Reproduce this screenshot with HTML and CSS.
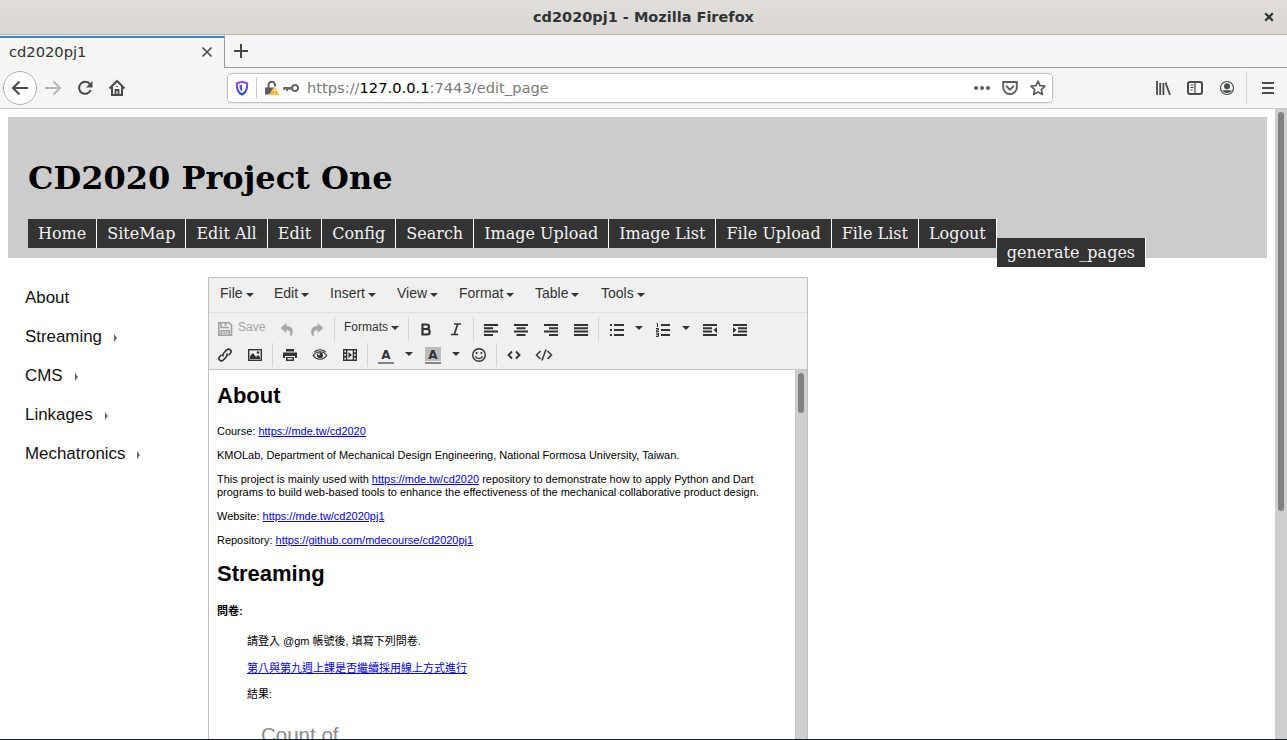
FILE: index.html
```html
<!DOCTYPE html>
<html lang="en">
<head>
<meta charset="utf-8">
<title>cd2020pj1</title>
<link rel="stylesheet" href="styles.css">
</head>
<body>
<div class="window">
  <div class="titlebar">
    <span class="window-title">cd2020pj1 - Mozilla Firefox</span>
    <svg class="window-close" width="10" height="10" viewBox="0 0 10 10"><path d="M1.200 1.200l7.600 7.600M8.800 1.200L1.200 8.800" stroke="#2e3436" stroke-width="2.300"/></svg>
  </div>
  <div class="tabs">
    <div class="tab"><span>cd2020pj1</span><svg width="12" height="12" viewBox="0 0 12 12"><path d="M1.500 1.500l9 9M10.500 1.500l-9 9" stroke="#4a5052" stroke-width="1.700"/></svg></div>
    <div class="tab-rest"><svg width="16" height="16" viewBox="0 0 16 16"><path d="M8 1v14M1 8h14" stroke="#42484a" stroke-width="2"/></svg></div>
  </div>
  <div class="toolbar">
    <div class="back"><svg width="18" height="18" viewBox="0 0 18 18" fill="none" stroke="#464c4e" stroke-width="2"><path d="M17 9H2M8.500 2.500L2 9l6.500 6.500"/></svg></div>
    <div class="tool"><svg width="18" height="18" viewBox="0 0 18 18" fill="none" stroke="#b3b5b5" stroke-width="2"><path d="M1 9h15M9.500 2.500L16 9l-6.500 6.500"/></svg></div>
    <div class="tool"><svg width="16" height="16" viewBox="0 0 16 16"><path d="M13 4.300A6 6 0 1 0 13.700 10" fill="none" stroke="#464c4e" stroke-width="2"/><path d="M15.500 1v6.500H9z" fill="#464c4e"/></svg></div>
    <div class="tool"><svg width="18" height="18" viewBox="0 0 18 18" fill="none" stroke="#464c4e" stroke-width="2"><path d="M1.500 9.500L9 2l7.500 7.500M4 8v8h10V8"/><path d="M7.500 16v-5h3v5M9 7v1" stroke-width="1.800"/></svg></div>
    <div class="urlbar">
      <svg class="shield" width="14" height="16" viewBox="0 0 14 16"><defs><linearGradient id="g" x1="0" y1="0" x2="0" y2="1"><stop offset="0" stop-color="#8a4dff"/><stop offset="1" stop-color="#1c4fc4"/></linearGradient></defs><path d="M7 1.700l5.200 1.500c.2 4.800-.3 9-5.200 11.300C2.100 12.200 1.600 8 1.800 3.200z" fill="none" stroke="url(#g)" stroke-width="2"/><path d="M7 4.500v7C4.700 9.700 4.500 7.500 4.500 5.200z" fill="url(#g)"/></svg>
      <i class="url-sep"></i>
      <svg class="lock" width="16" height="16" viewBox="0 0 16 16"><path d="M4.500 8V5a3 3 0 0 1 6.500 0v1.500" fill="none" stroke="#5f5f60" stroke-width="2"/><path d="M1 7.500h10v7H1z" fill="#5f5f60"/><path d="M10.500 6.500L15.700 15H5.300z" fill="#ffb012" stroke="#f6f1e5" stroke-width=".5"/><path d="M10.500 9.300v2.800M10.500 13v1.100" stroke="#fff" stroke-width="1.300"/></svg>
      <svg class="key" width="16" height="12" viewBox="0 0 16 12"><circle cx="12" cy="6" r="3" fill="none" stroke="#69696a" stroke-width="2"/><path d="M9 6H1.200v2M4 6v3M6.500 6v2" fill="none" stroke="#69696a" stroke-width="2"/></svg>
      <span class="url">https://<b>127.0.0.1</b>:7443/edit_page</span>
      <span class="url-actions">
        <svg width="16" height="16" viewBox="0 0 16 16" fill="#5c5c5d"><circle cx="2" cy="8" r="2"/><circle cx="8" cy="8" r="2"/><circle cx="14" cy="8" r="2"/></svg>
        <svg width="16" height="16" viewBox="0 0 16 16" fill="none" stroke="#5c5c5d" stroke-width="1.900"><path d="M1.200 2h13.600v5.500a6.800 6.500 0 0 1-13.600 0z"/><path d="M4.500 6.300L8 9.600l3.500-3.300" stroke-linecap="round"/></svg>
        <svg width="16" height="16" viewBox="0 0 16 16" fill="none" stroke="#5c5c5d" stroke-width="1.700" stroke-linejoin="round"><path d="M8 1.200l2 4.500 5 .5-3.700 3.400 1 4.900L8 12l-4.300 2.500 1-4.900L1 6.200l5-.5z"/></svg>
      </span>
    </div>
    <div class="right-tools">
      <svg width="16" height="16" viewBox="0 0 16 16" stroke="#464c4e"><path d="M2 1v14M5.200 3v12M8.400 3v12M10.500 2.500L15 15" stroke-width="1.800"/></svg>
      <svg width="16" height="16" viewBox="0 0 16 16" fill="none" stroke="#464c4e"><rect x="1" y="2" width="14" height="12" rx="2" stroke-width="2"/><path d="M8 2v12" stroke-width="1.200"/><path d="M3.500 5h3M3.500 7.500h3M3.500 10h2"/></svg>
      <svg width="16" height="16" viewBox="0 0 16 16"><circle cx="8" cy="8" r="6.500" fill="none" stroke="#464c4e" stroke-width="1.200"/><circle cx="8" cy="6.300" r="3" fill="#464c4e"/><path d="M3.500 10.300h9C11.500 14 4.500 14 3.500 10.300z" fill="#464c4e"/></svg>
      <i></i>
      <svg width="12" height="12" viewBox="0 0 12 12" stroke="#464c4e" stroke-width="2"><path d="M0 1h12M0 6h12M0 11h12"/></svg>
    </div>
  </div>
  <div class="viewport">
    <div class="page">
      <header class="header">
        <h1>CD2020 Project One</h1>
        <nav class="nav"><a>Home</a><a>SiteMap</a><a>Edit All</a><a>Edit</a><a>Config</a><a>Search</a><a>Image Upload</a><a>Image List</a><a>File Upload</a><a>File List</a><a>Logout</a><a class="dropped">generate_pages</a></nav>
      </header>
      <div class="main">
        <ul class="side">
          <li>About</li>
          <li class="more">Streaming</li>
          <li class="more">CMS</li>
          <li class="more">Linkages</li>
          <li class="more">Mechatronics</li>
        </ul>
        <div class="editor">
          <div class="menubar"><span class="w54">File<i class="caret"></i></span><span class="w56">Edit<i class="caret"></i></span><span class="w67">Insert<i class="caret"></i></span><span class="w62">View<i class="caret"></i></span><span class="w76">Format<i class="caret"></i></span><span class="w66">Table<i class="caret"></i></span><span>Tools<i class="caret"></i></span></div>
          <div class="buttons">
            <div class="row">
              <div class="save"><svg width="16" height="16" viewBox="0 0 16 16" fill="none" stroke="#a2a2a2" stroke-width="1.600"><path d="M1.800 1.800H12L14.500 4v10.300H1.800z"/><path d="M4 2v4.500h8M8.500 2v3M4.200 14V9.800h8V14M6 12h4.500"/></svg><span>Save</span></div>
              <div class="btn"><svg width="16" height="16" viewBox="0 0 16 16" fill="#a8a8a8"><path d="M1.500 7L7.500 2v3c5.500 0 7.500 4 5.500 9-.5.700-1.500 1-2 1 1-4-.5-6-3.500-6v3z"/></svg></div>
              <div class="btn"><svg width="16" height="16" viewBox="0 0 16 16" fill="#a8a8a8"><path d="M14.500 7L8.500 2v3C3 5 1 9 3 14c.5.700 1.500 1 2 1-1-4 .5-6 3.500-6v3z"/></svg></div>
              <i class="sep"></i>
              <div class="formats">Formats<i class="caret"></i></div>
              <i class="sep"></i>
              <div class="btn bi"><svg width="16" height="16" viewBox="0 0 16 16" fill="none" stroke="#333" stroke-width="2.200"><path d="M4.500 3.500h4.200c3 0 3 4.500 0 4.500H4.500h4.700c3.300 0 3.300 5.500 0 5.500H4.500zV14"/></svg></div>
              <div class="btn bi"><svg width="16" height="16" viewBox="0 0 16 16" fill="none" stroke="#333" stroke-width="1.700"><path d="M6 3h7M3 13.500h7M9.700 3L6.300 13.500"/></svg></div>
              <i class="sep"></i>
              <div class="btn"><svg width="16" height="16" viewBox="0 0 16 16" stroke="#333" stroke-width="2"><path d="M1 4h14M1 7.300h9M1 10.600h14M1 14h9"/></svg></div>
              <div class="btn"><svg width="16" height="16" viewBox="0 0 16 16" stroke="#333" stroke-width="2"><path d="M1 4h14M3.500 7.300h9M1 10.600h14M3.500 14h9"/></svg></div>
              <div class="btn"><svg width="16" height="16" viewBox="0 0 16 16" stroke="#333" stroke-width="2"><path d="M1 4h14M6 7.300h9M1 10.600h14M6 14h9"/></svg></div>
              <div class="btn"><svg width="16" height="16" viewBox="0 0 16 16" stroke="#333" stroke-width="2"><path d="M1 4h14M1 7.300h14M1 10.600h14M1 14h14"/></svg></div>
              <i class="sep"></i>
              <div class="btn list"><svg width="16" height="16" viewBox="0 0 16 16" stroke="#333" stroke-width="2"><path d="M1 4h2M5 4h10M1 9h2M5 9h10M1 14h2M5 14h10"/></svg></div>
              <div class="drop"><i class="caret"></i></div>
              <div class="btn num"><svg width="16" height="16" viewBox="0 0 16 16" stroke="#333" stroke-width="2"><path d="M6 4h9M6 9h9M6 14h9"/><path d="M1.500 2.500h1V6M1 7.500h2.500v1.500H1.500v1.500H4M1 12h2.500v3.500H1M1 13.700h2.500" fill="none" stroke-width="1"/></svg></div>
              <div class="drop"><i class="caret"></i></div>
              <div class="btn list"><svg width="16" height="16" viewBox="0 0 16 16"><path d="M1 4h14M1 7.300h9M1 10.600h9M1 14h14" stroke="#333" stroke-width="2"/><path d="M15 6v6l-3.500-3z" fill="#333"/></svg></div>
              <div class="btn"><svg width="16" height="16" viewBox="0 0 16 16"><path d="M1 4h14M6 7.300h9M6 10.600h9M1 14h14" stroke="#333" stroke-width="2"/><path d="M1 6v6l3.500-3z" fill="#333"/></svg></div>
            </div>
            <div class="row second">
              <div class="btn"><svg width="16" height="16" viewBox="0 0 16 16" fill="none" stroke="#333" stroke-width="1.600"><path d="M6.500 9.500C5.200 8 6 6.700 7 5.700l2.500-2.600c3-2.500 6 .8 3.700 3.400L11.500 8.300"/><path d="M9.500 6.500c1.300 1.500.5 2.800-.5 3.800l-2.500 2.600c-3 2.500-6-.8-3.700-3.400l1.700-1.800"/></svg></div>
              <div class="btn"><svg width="16" height="16" viewBox="0 0 16 16"><rect x="1.700" y="2.700" width="12.600" height="10.600" fill="none" stroke="#333" stroke-width="1.400"/><path d="M3 12V9l3-3 3 4 2-2 2 2v2z" fill="#333"/><circle cx="11" cy="5.500" r="1.300" fill="#333"/></svg></div>
              <i class="sep"></i>
              <div class="btn"><svg width="16" height="16" viewBox="0 0 16 16" fill="#333"><path d="M4 2h8v2.500H4zM1 5.500h14V11h-2V9H3v2H1zM4 10h8v4H4z"/><path d="M5.500 11h5v1.500h-5z" fill="#efefef"/></svg></div>
              <div class="btn"><svg width="16" height="16" viewBox="0 0 16 16"><path d="M1.300 8.500C4.500 3.500 11.500 3.500 14.700 8.500c-3.200 5-10.200 5-13.400 0zM2.500 5C5.500 2 10.500 2 13.500 5" fill="none" stroke="#333" stroke-width="1.200"/><circle cx="8" cy="8.300" r="3" fill="#333"/><circle cx="7" cy="7.300" r="1" fill="#efefef"/></svg></div>
              <div class="btn"><svg width="16" height="16" viewBox="0 0 16 16"><path d="M1 2h14v12H1z" fill="#333"/><path d="M2.300 3.500h1.700v1.700H2.300zM2.300 7h1.700v1.700H2.300zM2.300 10.700h1.700v1.700H2.300zM12 3.500h1.700v1.700H12zM12 7h1.700v1.700H12zM12 10.700h1.700v1.700H12zM5.300 3.500h5.400v9H5.300z" fill="#efefef"/><path d="M6.500 5v6L10 8z" fill="#333"/></svg></div>
              <i class="sep"></i>
              <div class="btn color"><span>A</span></div>
              <div class="drop"><i class="caret"></i></div>
              <div class="btn color shaded"><span>A</span></div>
              <div class="drop"><i class="caret"></i></div>
              <div class="btn"><svg width="16" height="16" viewBox="0 0 16 16"><circle cx="8" cy="8" r="6.300" fill="none" stroke="#333" stroke-width="1.400"/><circle cx="5.600" cy="6" r="1.100" fill="#333"/><circle cx="10.400" cy="6" r="1.100" fill="#333"/><path d="M4.300 9.300c1.500 3 5.900 3 7.400 0" fill="none" stroke="#333" stroke-width="1.300"/></svg></div>
              <i class="sep"></i>
              <div class="btn"><svg width="16" height="16" viewBox="0 0 16 16" fill="none" stroke="#333" stroke-width="1.900"><path d="M6 4.500L2.500 8 6 11.500M10 4.500L13.500 8 10 11.500"/></svg></div>
              <div class="btn"><svg width="18" height="16" viewBox="0 0 18 16" fill="none" stroke="#333" stroke-width="1.500"><path d="M5.500 4L1.500 8l4 4M12.500 4l4 4-4 4M11 2.500L7 13.500"/></svg></div>
            </div>
          </div>
          <div class="edit-area">
            <div class="doc">
              <h2>About</h2>
              <p>Course: <a>https://mde.tw/cd2020</a></p>
              <p>KMOLab, Department of Mechanical Design Engineering, National Formosa University, Taiwan.</p>
              <p>This project is mainly used with <a>https://mde.tw/cd2020</a> repository to demonstrate how to apply Python and Dart<br>programs to build web-based tools to enhance the effectiveness of the mechanical collaborative product design.</p>
              <p>Website: <a>https://mde.tw/cd2020pj1</a></p>
              <p>Repository: <a>https://github.com/mdecourse/cd2020pj1</a></p>
              <h2 class="stream">Streaming</h2>
              <h4>問卷:</h4>
              <div class="quote">
                <p>請登入 @gm 帳號後, 填寫下列問卷.</p>
                <p><a>第八與第九週上課是否繼續採用線上方式進行</a></p>
                <p>結果:</p>
                <div class="chart-title">Count of</div>
              </div>
            </div>
            <div class="inner-scroll"><div></div></div>
          </div>
        </div>
      </div>
    </div>
    <div class="scroll"><div></div></div>
  </div>
</div>
</body>
</html>
```
FILE: styles.css
```css
* { box-sizing: border-box; }
body { margin: 0; background: #fff; overflow: hidden; }
svg { display: block; flex: none; }
.window { width: 1287px; height: 740px; display: flex; flex-direction: column; overflow: hidden; border-bottom: 1px solid #14223c; }

.titlebar { height: 35px; flex: none; display: flex; align-items: center; padding-bottom: 1px; background: linear-gradient(#e1dedb, #dad6d2); border-bottom: 1px solid #bfb4a9; font: bold 14.5px/32px "DejaVu Sans", sans-serif; color: #2e3436; }
.window-title { flex: 1; text-align: center; padding-left: 23px; }
.window-close { margin-right: 13px; }

.tabs { height: 33px; flex: none; display: flex; background: #f6f5f4; }
.tab { width: 225px; border-right: 1px solid #9c9c9a; border-top: 1px solid #e9eef4; box-shadow: inset 0 2px #3584e4; display: flex; justify-content: space-between; align-items: center; padding: 0 11px 0 9px; font: 14.667px/20px "DejaVu Sans", sans-serif; color: #2e3436; }
.tab-rest { flex: 1; padding: 8px; border-bottom: 1px solid #9c9c9a; }

.toolbar { height: 41px; flex: none; display: flex; align-items: center; background: #f6f5f4; border-bottom: 1px solid #cdc7c2; padding-left: 3px; }
.back { width: 34px; height: 34px; border: 1px solid #b2b1af; border-radius: 50%; background: #fff; display: flex; align-items: center; justify-content: center; }
.tool { width: 32px; display: flex; justify-content: center; }
.urlbar { flex: none; margin-left: 94px; width: 826px; height: 30px; border: 1px solid #c8c3be; border-radius: 4px; background: #fff; display: flex; align-items: center; box-shadow: 0 1px 3px #0001; }
.shield { margin-left: 7px; }
.url-sep { width: 1px; height: 22px; margin-left: 7px; background: #cdcac7; }
.lock { margin-left: 7px; }
.key { margin-left: 3px; }
.url { margin-left: 8px; font: 14.667px/20px "DejaVu Sans", sans-serif; color: #7a7a7a; }
.url b { font-weight: normal; color: #000; }
.url-actions { margin-left: auto; margin-right: 6px; display: flex; gap: 12px; }
.right-tools { flex: none; display: flex; align-items: center; margin-left: 102px; }
.right-tools svg { margin-right: 16px; }
.right-tools svg:last-child { margin-right: 0; }
.right-tools i { width: 1px; height: 34px; background: #dcdad8; margin: 0 15px 0 -5px; }

.viewport { flex: 1; min-height: 0; display: flex; }
.page { flex: 1; min-width: 0; padding: 8px 8px 0; overflow: hidden; }
.scroll { width: 12px; background: #cecece; border-left: 1px solid #d3cec9; padding: 3px 2px; }
.scroll div { width: 6px; height: 399px; border-radius: 3px; background: #7e8382; }

.header { height: 141px; background: #ccc; padding: 42px 20px 0; }
.header h1 { margin: 0; font: bold 32px/38px "DejaVu Serif", serif; height: 60px; color: #000; }
.nav { display: flex; align-items: flex-start; font: 16px/19px "DejaVu Serif", serif; color: #f4f4f4; }
.nav a { flex: none; height: 29px; padding: 5px 10px; background: #333; border-right: 1px solid #fff; white-space: nowrap; }
.nav .dropped { margin-top: 19px; }

.main { display: flex; padding-top: 19px; }
.side { list-style: none; margin: 0; padding: 1px 0 0 17px; width: 200px; font: 16.9px/39px "Liberation Sans", sans-serif; color: #111; }
.side li { display: flex; align-items: center; height: 39px; }
.side .more::after { content: ""; margin: 3px 0 0 12px; border-left: 3.500px solid #666; border-top: 4px solid transparent; border-bottom: 4px solid transparent; }

.editor { width: 600px; height: 520px; border: 1px solid #c0c0c0; border-bottom: 0; display: flex; flex-direction: column; font-family: "Liberation Sans", sans-serif; color: #333; }
.menubar { height: 35px; flex: none; display: flex; padding: 5px 0 0 11px; background: #f0f0f0; border-bottom: 1px solid #e2e2e2; font-size: 14px; line-height: 20px; }
.menubar .caret { margin-left: 3px; }
.w54 { width: 54px; }
.w56 { width: 56px; }
.w67 { width: 67px; }
.w62 { width: 62px; }
.w76 { width: 76px; }
.w66 { width: 66px; }
.caret { display: inline-block; border: 4px solid transparent; border-top-color: #333; border-bottom-width: 0; vertical-align: 1px; }
.buttons { height: 57px; flex: none; background: #f0f0f0; border-bottom: 1px solid #c5c5c5; padding: 2px 0 0 1px; }
.row { height: 27px; display: flex; align-items: center; }
.row.second { height: 26px; }
.btn { width: 30px; display: flex; justify-content: center; }
.bi { padding-right: 1px; }
.btn.list { width: 31px; }
.btn.num { width: 32px; }
.drop { width: 15px; display: flex; justify-content: center; }
.row .drop .caret { margin: -2px 2px 0 0; }
.sep { flex: none; width: 1px; height: 24px; margin: 0 2px; background: #d4d4d4; }
.save { width: 62px; display: flex; align-items: center; padding-left: 7px; gap: 5px; color: #a5a5a5; font-size: 12px; }
.save span, .formats { padding-bottom: 4px; }
.formats { width: 69px; padding-left: 7px; font-size: 12px; white-space: nowrap; }
.formats .caret { margin-left: 3px; }
.btn.color { width: 32px; }
.color span { width: 16px; height: 17px; border-bottom: 2px solid #858585; font: bold 12px/16px "DejaVu Sans", sans-serif; text-align: center; }
.shaded span { background: #bbb; box-shadow: inset 0 -1px #f0f0f0; }

.edit-area { flex: 1; min-height: 0; display: flex; background: #fff; }
.doc { flex: 1; padding: 10px 8px 0; overflow: hidden; font-size: 10.98px; line-height: 13px; color: #000; white-space: nowrap; }
.doc h2 { margin: 0 0 14px; font-size: 22px; line-height: 31px; }
.doc p { margin: 0 0 11px; }
.doc a { color: #0000ee; text-decoration: underline; }
.doc .stream { margin-bottom: 16px; }
.doc h4 { margin: 0 0 17px; font: bold 11px/13px "Liberation Sans", "Noto Sans CJK TC", sans-serif; }
.quote { padding-left: 30px; font-family: "Liberation Sans", "Noto Sans CJK TC", sans-serif; font-size: 11px; }
.quote p { margin-bottom: 13.500px; }
.chart-title { padding: 8px 0 0 14px; font-size: 20.5px; line-height: 24px; color: #8b8b8b; }
.inner-scroll { width: 12px; background: #cecece; border-left: 1px solid #c4c4c4; padding: 3px 2px; }
.inner-scroll div { width: 6px; height: 40px; border-radius: 3px; background: #7e8382; }
```
